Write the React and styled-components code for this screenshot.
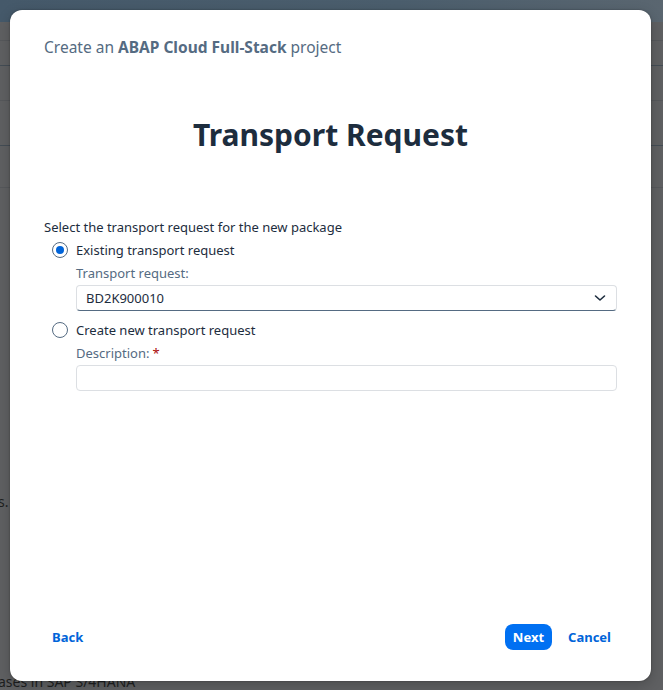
import React from 'react'
import styled, { createGlobalStyle } from 'styled-components'

const GlobalStyle = createGlobalStyle`
  html, body {
    margin: 0;
    padding: 0;
    width: 663px;
    height: 690px;
    overflow: hidden;
  }
  body {
    font-family: 'Noto Sans', 'Open Sans', sans-serif;
    background: #5f6062;
  }
`

const Page = styled.div`
  position: relative;
  width: 663px;
  height: 690px;
  background: #5f6062;
  overflow: hidden;
`

const TopBar = styled.div`
  height: 22px;
  background: linear-gradient(90deg, #45596a 0%, #4b5e6d 60%, #5a6670 100%);
`

const BgRow = styled.div`
  height: ${(p) => p.$h}px;
  border-bottom: 1px solid ${(p) => (p.$strong ? '#444d55' : '#56585b')};
`

const BgText = styled.div`
  margin-top: ${(p) => p.$top}px;
  margin-left: ${(p) => p.$indent}px;
  font-size: 14px;
  color: #1e1f20;
  white-space: nowrap;
`

const Dialog = styled.div`
  position: absolute;
  left: 10px;
  top: 10px;
  width: 641px;
  height: 671px;
  background: #ffffff;
  border-radius: 12px;
  box-shadow: 0 0 2px rgba(0, 0, 0, 0.35), 0 4px 14px rgba(0, 0, 0, 0.2);
  display: flex;
  flex-direction: column;
  box-sizing: border-box;
  padding: 26px 34px 31px 34px;
`

const Subtitle = styled.div`
  font-size: 15.5px;
  color: #556b82;
  line-height: 22px;

  b {
    font-weight: 700;
  }
`

const Title = styled.h1`
  margin: 58px 0 0 0;
  text-align: center;
  font-size: 30px;
  font-weight: 700;
  color: #1d2d3e;
  line-height: 38px;
`

const Form = styled.div`
  margin-top: 64px;
  display: flex;
  flex-direction: column;
`

const Prompt = styled.div`
  font-size: 13px;
  line-height: 18px;
  color: #1d2d3e;
`

const RadioRow = styled.label`
  display: flex;
  align-items: center;
  gap: 8px;
  margin-top: ${(p) => p.$top}px;
  padding-left: 8px;
  font-size: 13px;
  line-height: 18px;
  color: #1d2d3e;
`

const RadioCircle = styled.span`
  width: 16px;
  height: 16px;
  box-sizing: border-box;
  border-radius: 50%;
  border: 1px solid #556b82;
  display: flex;
  align-items: center;
  justify-content: center;

  &::after {
    content: '';
    width: 8px;
    height: 8px;
    border-radius: 50%;
    background: ${(p) => (p.$checked ? '#0064d9' : 'transparent')};
  }
`

const Field = styled.div`
  padding-left: 32px;
  display: flex;
  flex-direction: column;
  margin-top: 5px;
`

const Label = styled.div`
  font-size: 13px;
  line-height: 18px;
  color: #556b82;

  span {
    color: #aa0808;
    margin-left: 3px;
  }
`

const Box = styled.div`
  margin-top: 3px;
  height: 26px;
  box-sizing: border-box;
  border: 1px solid #dcdfe3;
  border-bottom: 1px solid ${(p) => (p.$select ? '#556b82' : '#dcdfe3')};
  border-radius: 4px;
  display: flex;
  align-items: center;
  justify-content: space-between;
  padding: 0 10px 0 9px;
  font-size: 13px;
  color: #1d2d3e;
`

const Footer = styled.div`
  margin-top: auto;
  display: flex;
  align-items: center;
  padding: 0 6px 0 8px;
`

const LinkButton = styled.button`
  border: none;
  background: transparent;
  padding: 0;
  font-family: inherit;
  font-size: 13px;
  font-weight: 700;
  color: #0064d9;
  cursor: pointer;
`

const PrimaryButton = styled.button`
  margin-left: auto;
  margin-right: 16px;
  height: 26px;
  padding: 0 8px;
  border: none;
  border-radius: 8px;
  background: #0070f2;
  color: #ffffff;
  font-family: inherit;
  font-size: 13px;
  font-weight: 700;
  cursor: pointer;
`

const Chevron = () => (
  <svg width="12" height="12" viewBox="0 0 12 12" fill="none">
    <path d="M1.5 4 L6 8 L10.5 4" stroke="#1d2d3e" strokeWidth="1.6" strokeLinecap="round" strokeLinejoin="round" />
  </svg>
)

export default function App() {
  return (
    <>
      <GlobalStyle />
      <Page>
        <TopBar />
        <BgRow $h={18} />
        <BgRow $h={24} $strong />
        <BgRow $h={34} />
        <BgRow $h={44} $strong />
        <BgRow $h={41} />
        <BgText $top={304} $indent={-2}>s.</BgText>
        <BgText $top={161} $indent={-2}>ases in SAP S/4HANA</BgText>
        <Dialog>
          <Subtitle>
            Create an <b>ABAP Cloud Full-Stack</b> project
          </Subtitle>
          <Title>Transport Request</Title>
          <Form>
            <Prompt>Select the transport request for the new package</Prompt>
            <RadioRow $top={5}>
              <RadioCircle $checked />
              Existing transport request
            </RadioRow>
            <Field>
              <Label>Transport request:</Label>
              <Box $select>
                BD2K900010
                <Chevron />
              </Box>
            </Field>
            <RadioRow $top={10}>
              <RadioCircle />
              Create new transport request
            </RadioRow>
            <Field>
              <Label>
                Description:<span>*</span>
              </Label>
              <Box />
            </Field>
          </Form>
          <Footer>
            <LinkButton>Back</LinkButton>
            <PrimaryButton>Next</PrimaryButton>
            <LinkButton>Cancel</LinkButton>
          </Footer>
        </Dialog>
      </Page>
    </>
  )
}
